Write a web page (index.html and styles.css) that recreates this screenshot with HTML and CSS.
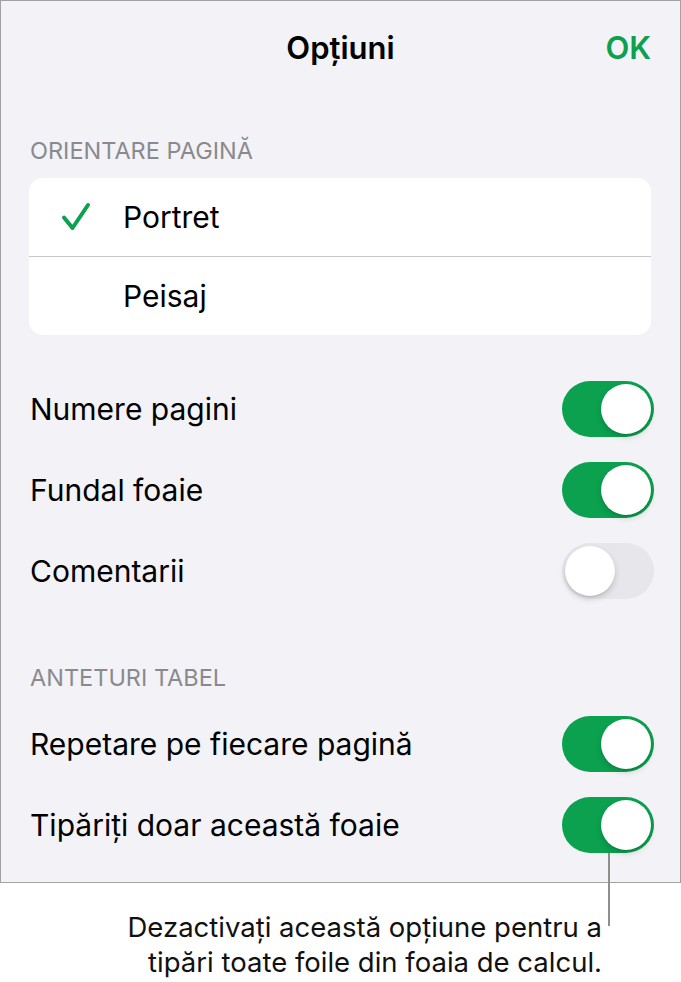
FILE: index.html
```html
<!DOCTYPE html>
<html lang="ro">
<head>
    <meta charset="UTF-8">
    <meta name="viewport" content="width=device-width, initial-scale=1.0">
    <title>Opțiuni</title>
    <link rel="stylesheet" href="styles.css">
</head>
<body>
    <div class="panel">
        <div class="navbar">
            <span></span>
            <h1 class="title">Opțiuni</h1>
            <button class="ok">OK</button>
        </div>

        <div class="section-head first">ORIENTARE PAGINĂ</div>
        <div class="card">
            <div class="choice">
                <svg class="check" width="30" height="30" viewBox="0 0 30 30">
                    <path d="M3 15.5 L11.5 26 L27 3" fill="none" stroke="#0ba14f" stroke-width="4" stroke-linecap="round" stroke-linejoin="round"/>
                </svg>
                <span>Portret</span>
            </div>
            <div class="choice">
                <span class="nocheck"></span>
                <span>Peisaj</span>
            </div>
        </div>

        <div class="rows">
            <div class="row">
                <span>Numere pagini</span>
                <span class="switch on"><span class="knob"></span></span>
            </div>
            <div class="row">
                <span>Fundal foaie</span>
                <span class="switch on"><span class="knob"></span></span>
            </div>
            <div class="row">
                <span>Comentarii</span>
                <span class="switch"><span class="knob"></span></span>
            </div>
        </div>

        <div class="section-head second">ANTETURI TABEL</div>
        <div class="rows tight">
            <div class="row">
                <span>Repetare pe fiecare pagină</span>
                <span class="switch on"><span class="knob"></span></span>
            </div>
            <div class="row">
                <span>Tipăriți doar această foaie</span>
                <span class="switch on pointed"><span class="knob"></span></span>
            </div>
        </div>
    </div>

    <p class="callout">Dezactivați această opțiune pentru a<br>tipări toate foile din foaia de calcul.</p>
</body>
</html>
```

FILE: styles.css
```css
body{
    margin: 0;
    background-color: #fff;
    font-family: Inter, Roboto, "Liberation Sans", sans-serif;
    color: #000;
}
.panel{
    width: 681px;
    height: 883px;
    box-sizing: border-box;
    border: 1px solid #a2a2a4;
    background-color: #f2f2f7;
}
.navbar{
    height: 93px;
    display: grid;
    grid-template-columns: 1fr auto 1fr;
    align-items: center;
    padding: 0 29px 0 29px;
}
.title{
    margin: 0;
    font-size: 31px;
    font-weight: 600;
}
.ok{
    justify-self: end;
    border: none;
    background: none;
    padding: 0;
    font-family: inherit;
    font-size: 31px;
    font-weight: 600;
    color: #0ba14f;
}
.section-head{
    padding-left: 29px;
    font-size: 23.5px;
    line-height: 28px;
    color: #8a8a8e;
}
.section-head.first{
    margin-top: 43px;
}
.section-head.second{
    margin-top: 53px;
}
.card{
    margin: 13px 29px 0 28px;
    background-color: #fff;
    border-radius: 14px;
}
.choice{
    height: 78px;
    display: flex;
    align-items: center;
    font-size: 30px;
}
.choice + .choice{
    border-top: 1px solid #c8c8cc;
}
.check, .nocheck{
    width: 30px;
    height: 30px;
    margin: 0 32px 0 32px;
}
.rows{
    margin-top: 33px;
    padding: 0 26px 0 29px;
}
.rows.tight{
    margin-top: 11px;
}
.row{
    height: 81px;
    display: flex;
    align-items: center;
    justify-content: space-between;
    font-size: 30px;
}
.switch{
    position: relative;
    width: 92px;
    height: 56px;
    border-radius: 28px;
    background-color: #e6e6eb;
}
.switch.on{
    background-color: #0ba14f;
}
.knob{
    position: absolute;
    top: 3px;
    left: 3px;
    width: 50px;
    height: 50px;
    border-radius: 50%;
    background-color: #fff;
    box-shadow: 0 3px 6px rgba(0, 0, 0, 0.16), 0 1px 1px rgba(0, 0, 0, 0.1);
}
.switch.on .knob{
    left: 39px;
}
.pointed::after{
    content: "";
    position: absolute;
    left: 46px;
    top: 56px;
    width: 2px;
    height: 73px;
    background-color: #8e8e8e;
}
.callout{
    margin: 27px 0 0 0;
    width: 602px;
    text-align: right;
    font-size: 27.5px;
    line-height: 35px;
    color: #111;
}
```
